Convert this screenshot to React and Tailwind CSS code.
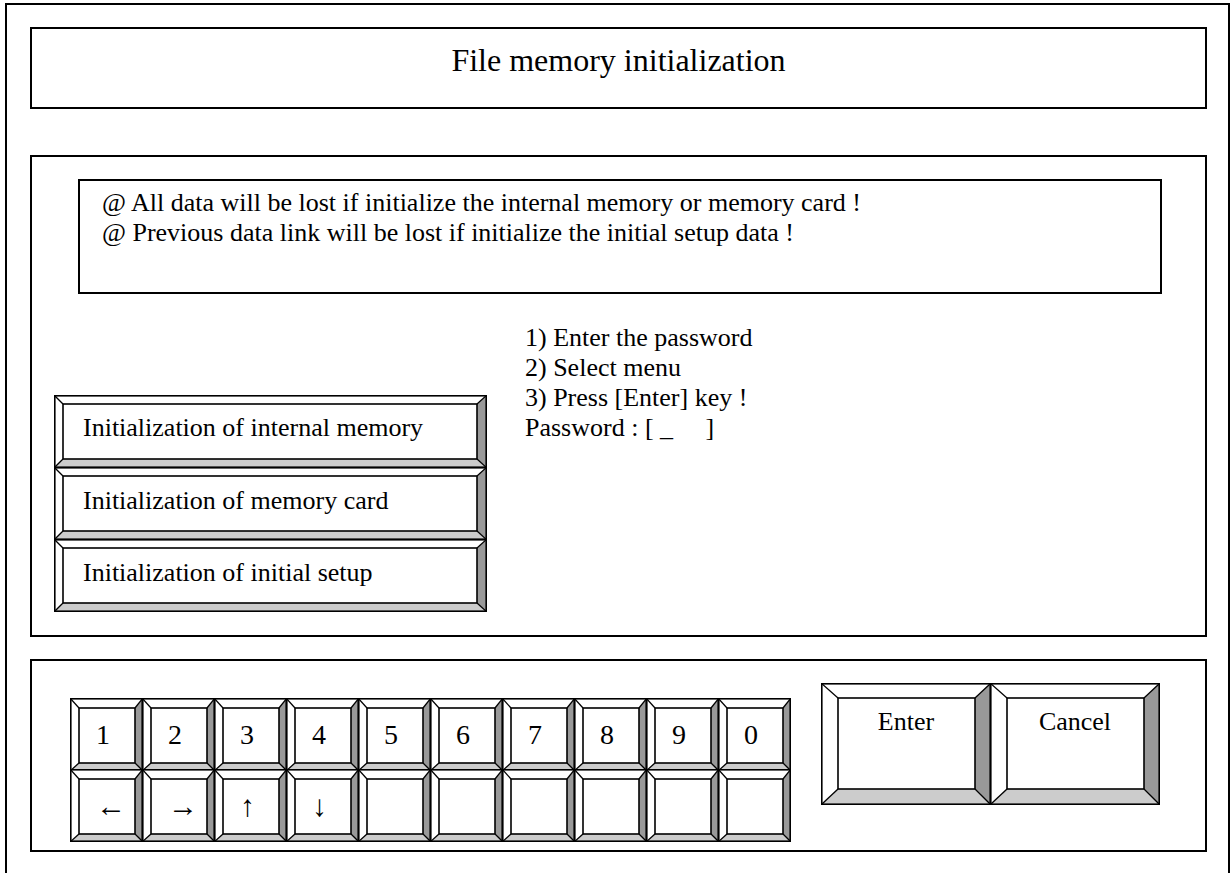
import React from "react";

function Bevel({ w, h, t, l, r, b, className = "", innerClassName = "", children }) {
  return (
    <div className={"relative shrink-0 " + className}>
      <svg className="absolute inset-0" width={w} height={h} viewBox={`0 0 ${w} ${h}`}>
        <polygon points={`0,0 ${w},0 ${w - r},${t} ${l},${t}`} fill="#ffffff" />
        <polygon points={`0,0 ${l},${t} ${l},${h - b} 0,${h}`} fill="#ffffff" />
        <polygon points={`${w},0 ${w},${h} ${w - r},${h - b} ${w - r},${t}`} fill="#999999" />
        <polygon points={`0,${h} ${l},${h - b} ${w - r},${h - b} ${w},${h}`} fill="#cccccc" />
        <rect x={l} y={t} width={w - l - r} height={h - t - b} fill="#ffffff" stroke="#000" strokeWidth="1.6" />
        <line x1="0" y1="0" x2={l} y2={t} stroke="#000" strokeWidth="1.3" />
        <line x1={w} y1="0" x2={w - r} y2={t} stroke="#000" strokeWidth="1.3" />
        <line x1="0" y1={h} x2={l} y2={h - b} stroke="#000" strokeWidth="1.3" />
        <line x1={w} y1={h} x2={w - r} y2={h - b} stroke="#000" strokeWidth="1.3" />
        <rect x="0.8" y="0.8" width={w - 1.6} height={h - 1.6} fill="none" stroke="#000" strokeWidth="1.6" />
      </svg>
      <div className={"relative h-full w-full " + innerClassName}>{children}</div>
    </div>
  );
}

const keysTop = ["1", "2", "3", "4", "5", "6", "7", "8", "9", "0"];
const keysBottom = ["←", "→", "↑", "↓", "", "", "", "", "", ""];

export default function App() {
  return (
    <div
      className="w-[1231px] h-[873px] overflow-hidden bg-white text-black"
      style={{ fontFamily: '"Liberation Serif", "Times New Roman", serif' }}
    >
      <div className="ml-[5px] mt-[3px] w-[1225px] h-[900px] border-2 border-b-0 border-black pl-[23px] pt-[22px]">
        {/* Title */}
        <div className="w-[1177px] h-[82px] border-2 border-black pt-[11px] text-center text-[32px] leading-[40px]">
          File memory initialization
        </div>

        {/* Main panel */}
        <div className="mt-[46px] w-[1177px] h-[482px] border-2 border-black pl-[46px] pt-[22px]">
          <div className="w-[1084px] h-[115px] border-2 border-black pl-[22px] pt-[7px] text-[26px] leading-[30px]">
            <div>@ All data will be lost if initialize the internal memory or memory card !</div>
            <div>@ Previous data link will be lost if initialize the initial setup data !</div>
          </div>

          <div className="flex items-start -ml-[24px] mt-[29px]">
            <div className="mt-[72px] flex flex-col">
              <Bevel w={433} h={73} t={9} l={9} r={10} b={9} className="w-[433px] h-[73px]" innerClassName="pl-[29px] pt-[18px] text-[26px] leading-[30px]">
                Initialization of internal memory
              </Bevel>
              <Bevel w={433} h={73} t={9} l={9} r={10} b={9} className="w-[433px] h-[73px] -mt-px" innerClassName="pl-[29px] pt-[19px] text-[26px] leading-[30px]">
                Initialization of memory card
              </Bevel>
              <Bevel w={433} h={73} t={9} l={9} r={10} b={9} className="w-[433px] h-[73px] -mt-px" innerClassName="pl-[29px] pt-[19px] text-[26px] leading-[30px]">
                Initialization of initial setup
              </Bevel>
            </div>
            <div className="ml-[38px] text-[26px] leading-[30px]">
              <div>1) Enter the password</div>
              <div>2) Select menu</div>
              <div>3) Press [Enter] key !</div>
              <div className="whitespace-pre">Password : [ _     ]</div>
            </div>
          </div>
        </div>

        {/* Bottom panel */}
        <div className="mt-[22px] w-[1177px] h-[193px] border-2 border-black flex items-start pl-[38px]">
          <div className="mt-[37px] grid grid-cols-[repeat(10,72px)] grid-rows-[72px_73px]">
            {keysTop.map((k, i) => (
              <Bevel key={"t" + i} w={73} h={73} t={10} l={9} r={8} b={8} className="w-[73px] h-[73px]" innerClassName="flex items-center pl-[26px] text-[28px] leading-[30px]">
                {k}
              </Bevel>
            ))}
            {keysBottom.map((k, i) => (
              <Bevel key={"b" + i} w={73} h={73} t={10} l={9} r={8} b={8} className="w-[73px] h-[73px] -mt-px" innerClassName="flex items-center pl-[26px] text-[30px] leading-[30px]">
                {k}
              </Bevel>
            ))}
          </div>
          <div className="ml-[31px] mt-[22px] flex">
            <Bevel w={170} h={122} t={15} l={17} r={16} b={16} className="w-[170px] h-[122px]" innerClassName="pt-[24px] text-center text-[26px] leading-[30px]">
              Enter
            </Bevel>
            <Bevel w={170} h={122} t={15} l={17} r={16} b={16} className="w-[170px] h-[122px] -ml-px" innerClassName="pt-[24px] text-center text-[26px] leading-[30px]">
              Cancel
            </Bevel>
          </div>
        </div>
      </div>
    </div>
  );
}
